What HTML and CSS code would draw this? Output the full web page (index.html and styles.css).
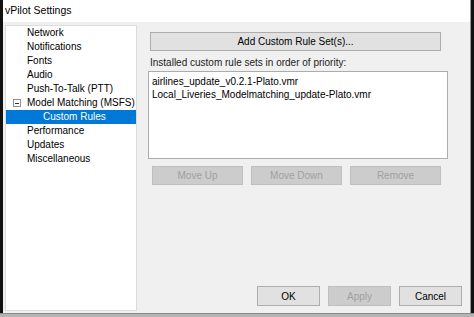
FILE: index.html
```html
<!DOCTYPE html>
<html lang="en">
<head>
  <meta charset="UTF-8">
  <title>vPilot Settings</title>
  <link rel="stylesheet" href="styles.css">
</head>
<body>

<div class="window">
  <div class="title-bar">vPilot Settings</div>

  <div class="main">
    <!-- Settings tree -->
    <ul class="tree">
      <li class="node">Network</li>
      <li class="node">Notifications</li>
      <li class="node">Fonts</li>
      <li class="node">Audio</li>
      <li class="node">Push-To-Talk (PTT)</li>
      <li class="node"><span class="toggle"></span>Model Matching (MSFS)</li>
      <li class="node child selected">Custom Rules</li>
      <li class="node">Performance</li>
      <li class="node">Updates</li>
      <li class="node">Miscellaneous</li>
    </ul>

    <div class="right">
      <div class="panel">
        <button class="btn wide">Add Custom Rule Set(s)...</button>
        <div class="caption">Installed custom rule sets in order of priority:</div>
        <div class="listbox">
          <div>airlines_update_v0.2.1-Plato.vmr</div>
          <div>Local_Liveries_Modelmatching_update-Plato.vmr</div>
        </div>
        <div class="btn-row">
          <button class="btn" disabled>Move Up</button>
          <button class="btn" disabled>Move Down</button>
          <button class="btn" disabled>Remove</button>
        </div>
      </div>

      <div class="dialog-buttons">
        <button class="btn">OK</button>
        <button class="btn" disabled>Apply</button>
        <button class="btn">Cancel</button>
      </div>
    </div>
  </div>
</div>
<div class="taskbar"></div>

</body>
</html>
```

FILE: styles.css
```css
body {
  margin: 0;
  background: #111;
  font-family: "Liberation Sans", Arial, sans-serif;
  font-size: 10px;
  color: #000;
  overflow: hidden;
}

.window {
  margin: 0 3px;
  height: 313px;
  background: #f0f0f0;
  border-right: 1px solid #9a9a9a;
  display: flex;
  flex-direction: column;
}

.title-bar {
  height: 22px;
  line-height: 20px;
  padding-left: 2px;
  background: #fff;
  font-size: 10.5px;
}

.main {
  flex: 1;
  display: flex;
  padding: 3px 0 2px 2px;
}

.tree {
  list-style: none;
  margin: 0;
  padding: 0;
  width: 130px;
  background: #fff;
  border: 1px solid #dcdcdc;
}

.node {
  position: relative;
  height: 14px;
  line-height: 14px;
  padding-left: 21px;
  white-space: nowrap;
}

.node.child {
  padding-left: 37px;
}

.node.selected {
  background: #0078d7;
  color: #fff;
}

.toggle {
  position: absolute;
  left: 7px;
  top: 3px;
  width: 8px;
  height: 8px;
  border: 1px solid #919191;
  box-sizing: border-box;
}

.toggle::after {
  content: "";
  position: absolute;
  left: 1px;
  top: 3px;
  width: 4px;
  height: 1px;
  background: #333;
}

.right {
  width: 300px;
  display: flex;
  flex-direction: column;
  justify-content: space-between;
  padding: 7px 0 5px 11px;
}

.panel {
  display: flex;
  flex-direction: column;
}

.btn {
  font-family: inherit;
  font-size: 10px;
  height: 19px;
  padding: 0;
  background: #e1e1e1;
  border: 1px solid #adadad;
  color: #000;
}

.btn:disabled {
  background: #cccccc;
  border-color: #bfbfbf;
  color: #a0a0a0;
}

.btn.wide {
  margin: 0 7px 0 2px;
}

.caption {
  margin: 6px 0 3px 2px;
  color: #222;
}

.listbox {
  height: 80px;
  background: #fff;
  border: 1px solid #acacac;
  padding: 3px 3px;
  line-height: 13px;
}

.btn-row {
  display: flex;
  gap: 8px;
  margin: 7px 0 0 4px;
}

.btn-row .btn {
  width: 91px;
}

.dialog-buttons {
  display: flex;
  justify-content: flex-end;
  gap: 8px;
  margin-right: -14px;
}

.dialog-buttons .btn {
  width: 63px;
  height: 20px;
}

.taskbar {
  height: 4px;
  background: #b4b4b4;
  border-top: 1px solid #8a8a8a;
}
```
